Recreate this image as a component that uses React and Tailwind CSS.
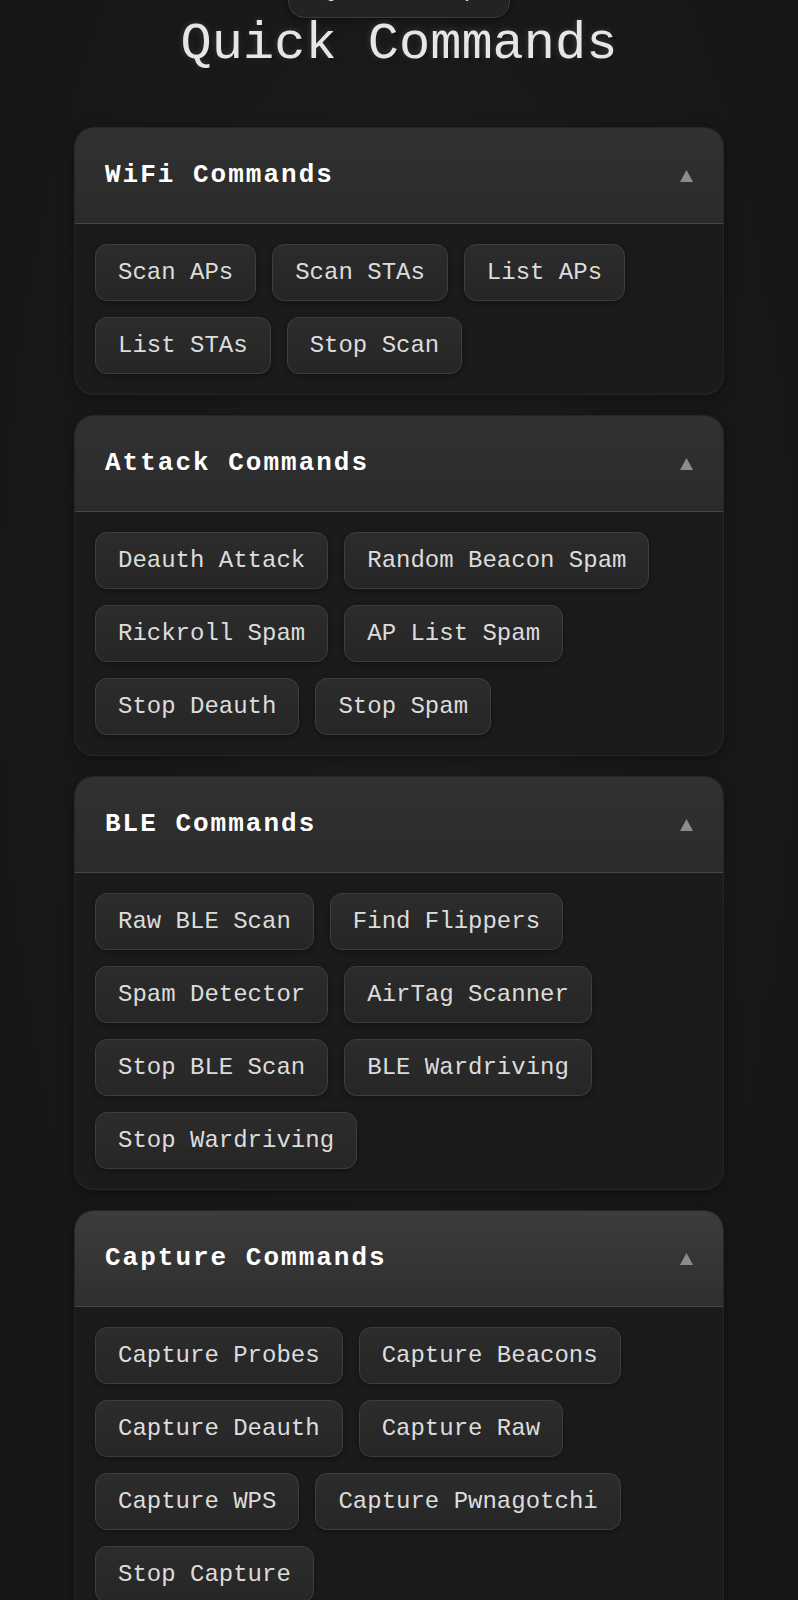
const GROUPS = [
  {
    title: 'WiFi Commands',
    items: ['Scan APs', 'Scan STAs', 'List APs', 'List STAs', 'Stop Scan'],
  },
  {
    title: 'Attack Commands',
    items: ['Deauth Attack', 'Random Beacon Spam', 'Rickroll Spam', 'AP List Spam', 'Stop Deauth', 'Stop Spam'],
  },
  {
    title: 'BLE Commands',
    items: [
      'Raw BLE Scan',
      'Find Flippers',
      'Spam Detector',
      'AirTag Scanner',
      'Stop BLE Scan',
      'BLE Wardriving',
      'Stop Wardriving',
    ],
  },
  {
    title: 'Capture Commands',
    items: [
      'Capture Probes',
      'Capture Beacons',
      'Capture Deauth',
      'Capture Raw',
      'Capture WPS',
      'Capture Pwnagotchi',
      'Stop Capture',
    ],
    active: true,
  },
]

export default function App() {
  return (
    <div className="min-h-screen w-full overflow-hidden bg-[#191919] bg-[radial-gradient(ellipse_at_50%_40%,#1d1d1d,#171717_70%)] font-['Courier_New','Liberation_Mono',monospace]">
      <div className="flex flex-col items-center">
        <button className="-mt-[39px] h-[57px] w-[222px] rounded-2xl border border-[#3a3a3a] bg-[#232323] px-[22px] text-[24px] text-[#dcdcdc] shadow-[0_2px_6px_rgba(0,0,0,0.4)]">
          Quick Setup
        </button>
        <h1 className="mt-px text-[52px] leading-none text-[#e6e6e6] [text-shadow:0_0_6px_rgba(255,255,255,0.18),2px_2px_3px_rgba(0,0,0,0.6)]">
          Quick Commands
        </h1>
      </div>

      <div className="mx-auto mt-[56px] flex w-[650px] flex-col gap-5">
        {GROUPS.map((g) => (
          <Section key={g.title} {...g} />
        ))}
      </div>
    </div>
  )
}

function Section({ title, items, active }) {
  return (
    <section className="overflow-hidden rounded-[20px] border border-white/5 bg-[#1b1b1b] shadow-[0_4px_14px_rgba(0,0,0,0.35)]">
      <div
        className={
          'flex h-[96px] items-center justify-between border-b border-[#474747] px-[30px] ' +
          (active
            ? 'bg-gradient-to-b from-[#3c3c3c] to-[#2f2f2f]'
            : 'bg-gradient-to-b from-[#313131] to-[#2b2b2b]')
        }
      >
        <h2 className="text-[26px] font-bold tracking-[2px] text-white">{title}</h2>
        <svg width="13" height="12" viewBox="0 0 13 12">
          <polygon points="6.5,0 13,12 0,12" fill="#8c8c8c" />
        </svg>
      </div>
      <div className="flex flex-wrap gap-4 p-5">
        {items.map((label) => (
          <button
            key={label}
            className="h-[57px] rounded-xl border border-[#3e3e3e] bg-gradient-to-b from-[#2c2c2c] to-[#262626] px-[22px] text-[24px] whitespace-nowrap text-[#dcdcdc] shadow-[0_2px_6px_rgba(0,0,0,0.35)]"
          >
            {label}
          </button>
        ))}
      </div>
    </section>
  )
}
